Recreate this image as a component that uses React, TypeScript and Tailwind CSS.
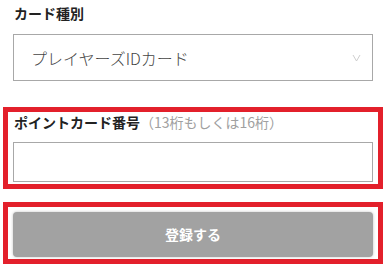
import React from "react";

export default function App() {
  return (
    <div
      className="w-[386px] h-[272px] bg-white overflow-hidden"
      style={{ fontFamily: '"Noto Sans CJK JP", "Noto Sans", sans-serif' }}
    >
      <div className="pt-[3px] px-[13px]">
        <div className="text-[14px] leading-[21px] font-bold text-[#222] pl-[1px]">カード種別</div>
        <div className="mt-[10px] h-[47px] border border-[#a8a8a8] flex items-center justify-between pl-[17px] pr-[10px]">
          <span className="text-[16px] font-light text-[#444]">プレイヤーズIDカード</span>
          <svg width="9" height="8" viewBox="0 0 9 8" className="mr-[1px]">
            <polyline points="1,1 4.5,7 8,1" fill="none" stroke="#c8c8c8" strokeWidth="0.9" />
          </svg>
        </div>
      </div>

      <div className="mt-[26px] mx-[3px] w-[380px] border-[5px] border-[#e3202b] px-[5px] pb-[2px]">
        <div className="text-[14px] leading-[20px] pl-[1px] flex">
          <span className="font-bold text-[#222]">ポイントカード番号</span>
          <span className="text-[#a0a0a0]">（13桁もしくは16桁）</span>
        </div>
        <div className="mt-[10px] h-[40px] border border-[#a8a8a8] bg-white"></div>
      </div>

      <div className="mt-[13px] mx-[3px] w-[380px] border-[5px] border-[#e3202b] px-[5px] pt-[5px] pb-[2px]">
        <div className="h-[45px] rounded-[4px] bg-[#a2a2a2] shadow-[0_0_3px_rgba(0,0,0,0.25)] flex items-center justify-center">
          <span className="text-white font-bold text-[14px]">登録する</span>
        </div>
      </div>
    </div>
  );
}
